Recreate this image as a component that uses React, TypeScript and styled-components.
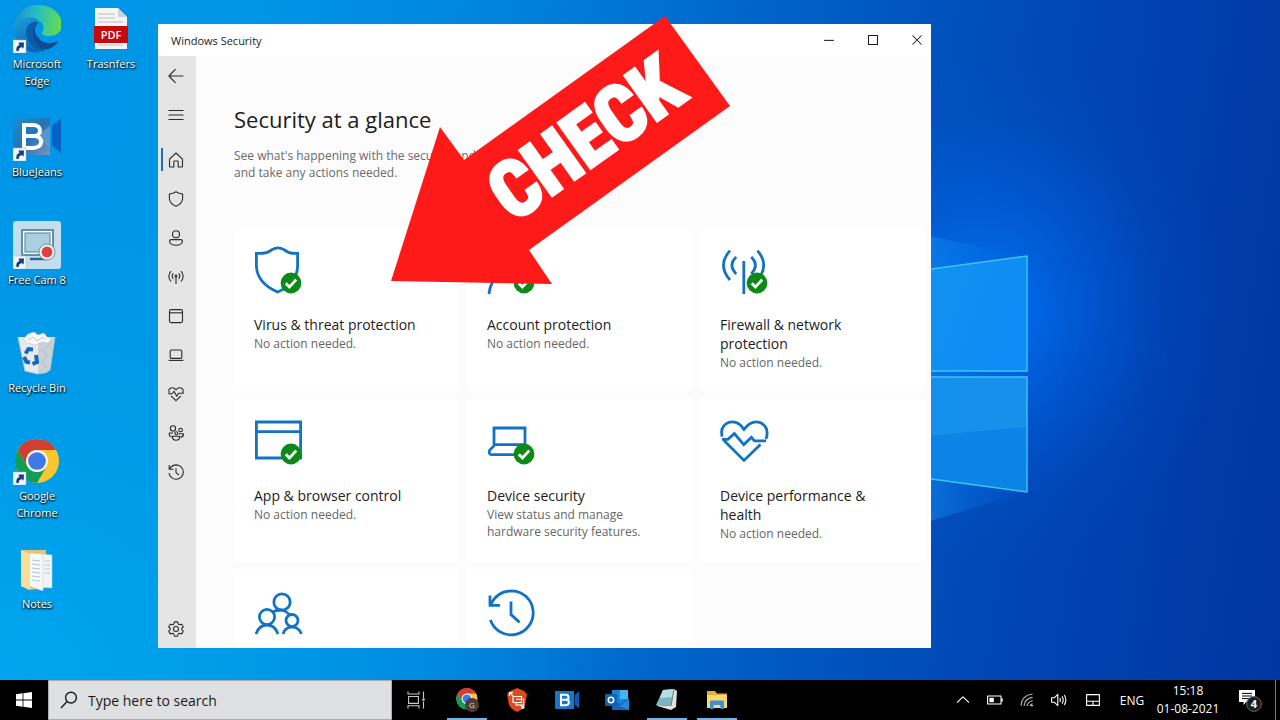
import React from "react";
import styled, { createGlobalStyle } from "styled-components";

const GlobalStyle = createGlobalStyle`
  *, *::before, *::after { box-sizing: border-box; }
  body {
    margin: 0;
    background: #000;
    font-family: "Open Sans", "Noto Sans", sans-serif;
  }
  button, input { font: inherit; color: inherit; }
`;

const Screen = styled.div`
  display: flex;
  flex-direction: column;
  min-height: 100vh;
`;

/* ---------- desktop ---------- */

const Desktop = styled.main`
  position: relative;
  flex: 1;
  overflow: hidden;
  isolation: isolate;
  background:
    radial-gradient(ellipse 240px 260px at 990px 310px, rgba(0, 120, 255, 0.8), rgba(0, 105, 240, 0.4) 45%, rgba(0, 90, 220, 0.12) 75%, transparent),
    radial-gradient(ellipse 620px 520px at 0 100%, rgba(0, 168, 238, 0.85), rgba(0, 160, 234, 0.5) 50%, transparent),
    linear-gradient(98deg, #0096e8 0%, #0096e6 18%, #0084de 36%, #0066cc 54%, #0050bc 70%, #0042b0 84%, #0036a2 100%);
`;

const Wallpaper = styled.svg`
  position: absolute;
  inset: 0;
  z-index: -1;
`;

const IconGrid = styled.div`
  display: grid;
  grid-template-rows: repeat(6, 108px);
  grid-auto-flow: column;
  grid-auto-columns: 74px;
  justify-content: start;
`;

const Shortcut = styled.button`
  display: flex;
  flex-direction: column;
  align-items: center;
  gap: 2px;
  padding: 5px 0 0;
  border: 0;
  background: none;
  color: #fff;
  font-size: 11px;
  line-height: 17px;
  text-shadow: 0 1px 2px #000, 1px 1px 2px rgba(0, 0, 0, 0.8);
`;

const ShortcutLabel = styled.span`
  max-width: 64px;
  text-align: center;
`;

/* ---------- security window ---------- */

const Window = styled.section`
  position: absolute;
  top: 24px;
  bottom: 32px;
  left: 158px;
  display: flex;
  flex-direction: column;
  width: 773px;
  max-width: calc(100% - 158px);
  overflow: hidden;
  background: #fcfcfc;
  color: #1c1c1c;
`;

const TitleBar = styled.header`
  display: flex;
  flex: 0 0 32px;
  align-items: center;
  padding-left: 13px;
  background: #fff;
`;

const WindowTitle = styled.span`
  flex: 1;
  font-size: 11px;
`;

const WindowButton = styled.button`
  display: grid;
  place-items: center;
  width: 44px;
  height: 32px;
  padding: 0;
  border: 0;
  background: none;
  &:last-child { margin-right: -8px; }
`;

const WindowBody = styled.div`
  display: flex;
  flex: 1;
  min-height: 0;
`;

const Sidebar = styled.nav`
  display: flex;
  flex: 0 0 38px;
  flex-direction: column;
  background: #e5e5e5;
`;

const SidebarGroup = styled.div`
  display: flex;
  flex: 1;
  flex-direction: column;
  padding-top: 6px;
`;

const SidebarButton = styled.button<{ $active?: boolean }>`
  display: grid;
  place-items: center;
  height: 39px;
  padding: 0 2px 0 0;
  border: 0;
  background: ${({ $active }) =>
    $active ? "linear-gradient(#1a6fb5, #1a6fb5) 3px center / 2px 23px no-repeat" : "none"};
  color: #2a2a2a;
`;

const Content = styled.div`
  flex: 1;
  min-width: 0;
  padding: 48px 0 0 38px;
`;

const Heading = styled.h1`
  margin: 0;
  font-size: 22px;
  font-weight: 400;
  line-height: 30px;
`;

const Intro = styled.p`
  margin: 13px 0 46px;
  color: #6b6b6b;
  font-size: 12px;
  line-height: 17px;
`;

const CardGrid = styled.div`
  display: grid;
  grid-template-columns: repeat(3, minmax(0, 225px));
  grid-auto-rows: 163px;
  gap: 8px;
`;

const Card = styled.a`
  padding: 19px 19px 0 20px;
  background: #fff;
  color: inherit;
  text-decoration: none;
`;

const CardIcon = styled.svg`
  display: block;
  width: 48px;
  height: 48px;
  margin-bottom: 21px;
  overflow: visible;
`;

const CardTitle = styled.h2`
  margin: 0 0 1px;
  font-size: 14px;
  font-weight: 400;
  line-height: 19px;
`;

const CardText = styled.p`
  margin: 0;
  color: #666;
  font-size: 12px;
  line-height: 17px;
`;

const Callout = styled.svg`
  position: absolute;
  top: 16px;
  left: 391px;
  pointer-events: none;
`;

/* ---------- taskbar ---------- */

const Taskbar = styled.footer`
  display: flex;
  flex: 0 0 40px;
  background: #000;
  color: #fff;
`;

const StartButton = styled.button`
  display: grid;
  flex: 0 0 48px;
  place-items: center;
  padding: 0;
  border: 0;
  background: none;
`;

const SearchBox = styled.label`
  display: flex;
  flex: 0 1 344px;
  align-items: center;
  gap: 10px;
  padding-left: 11px;
  border: 1px solid #a9abac;
  background: #dee0e1;
  color: #1a1a1a;
`;

const SearchInput = styled.input`
  flex: 1;
  min-width: 0;
  padding: 0;
  border: 0;
  outline: 0;
  background: none;
  font-size: 14px;
  &::placeholder { color: #1a1a1a; opacity: 1; }
`;

const TaskButton = styled.button<{ $running?: boolean }>`
  display: grid;
  flex: 0 0 50px;
  place-items: center;
  padding: 0;
  border: 0;
  background: ${({ $running }) =>
    $running ? "linear-gradient(#74b3e6, #74b3e6) center bottom / 40px 2px no-repeat" : "none"};
`;

const Tray = styled.div`
  display: flex;
  align-items: center;
  margin-left: auto;
`;

const TrayButton = styled.button<{ $wide?: boolean }>`
  display: grid;
  place-items: center;
  width: ${({ $wide }) => ($wide ? 36 : 32)}px;
  height: 40px;
  padding: 0;
  border: 0;
  background: none;
`;

const Language = styled.button`
  width: 42px;
  height: 40px;
  padding: 0;
  border: 0;
  background: none;
  font-size: 12px;
`;

const Clock = styled.time`
  width: 70px;
  font-size: 12px;
  line-height: 18px;
  text-align: center;
`;

const NotificationButton = styled(TrayButton)`
  width: 52px;
`;

const ShowDesktop = styled.button`
  width: 5px;
  height: 40px;
  padding: 0;
  border: 0;
  border-left: 1px solid #777;
  background: none;
`;

/* ---------- drawings ---------- */

const LinkArrow = () => (
  <g>
    <rect x="0" y="35" width="13" height="13" fill="#f4f6f8" stroke="#9fb4c6" strokeWidth=".5" />
    <path d="M3.4 46 C2.8 42.6 4 40.6 6.4 39.9 L5.4 37.6 L11 37.6 L10.6 43.4 L8.6 42 C6.6 42.8 5.4 43.8 5.8 46 Z" fill="#17407f" />
  </g>
);

const DesktopArt = ({ children }: { children: React.ReactNode }) => (
  <svg width="48" height="48" viewBox="0 0 48 48" aria-hidden="true">{children}</svg>
);

const EdgeIcon = () => (
  <DesktopArt>
    <defs>
      <linearGradient id="edgeTop" x1="0" y1="0.4" x2="1" y2="0.5">
        <stop offset="0" stopColor="#1c8fd6" /><stop offset=".45" stopColor="#27bcc4" /><stop offset="1" stopColor="#66dd4b" />
      </linearGradient>
      <linearGradient id="edgeLeft" x1="0" y1="0" x2="0.5" y2="1">
        <stop offset="0" stopColor="#1aa3df" /><stop offset="1" stopColor="#0d62b4" />
      </linearGradient>
    </defs>
    <path d="M1 22 C2 8 12 0 25 0 C39 0 49 9 49 20 C49 27 43 31 36 31 C30 31 28 29 29 27 C33 22 29 15 21 15 C12 15 5 19 1 26 Z" fill="url(#edgeTop)" />
    <path d="M1 22 C6 12 19 9 27 16 C20 13 13 20 13 29 C13 38 19 45 28 47 C12 50 0 38 1 22 Z" fill="url(#edgeLeft)" />
    <path d="M21 17 C15 22 15 31 20 38 C25 45 34 47 41 41 C44 39 45 37 44 36 C36 40 28 38 24 31 C21 27 21 22 25 18 C24 17 22 16 21 17 Z" fill="#0e4a91" />
    <path d="M21 17 C13 18 11 28 15 36 C19 44 25 47 32 46 C22 41 16 29 23 18 Z" fill="#0b5cab" />
    <LinkArrow />
  </DesktopArt>
);

const PdfIcon = () => (
  <DesktopArt>
    <path d="M8 3 H31 L40 12 V44 H8 Z" fill="#f5f5f5" />
    <path d="M31 3 V12 H40 Z" fill="#cbd4dc" />
    <path d="M11 9 H28 M11 13 H28 M11 17 H36 M11 40 H36" stroke="#cfcfcf" strokeWidth="1.4" />
    <rect x="7" y="21" width="34" height="17" rx="1" fill="#c6080f" />
    <text x="24" y="34" fill="#fff" fontSize="11" fontWeight="600" textAnchor="middle" style={{ textShadow: "none" }}>PDF</text>
  </DesktopArt>
);

const BlueJeansIcon = () => (
  <DesktopArt>
    <defs>
      <linearGradient id="bj" x1="0" y1="0" x2="1" y2="1">
        <stop offset="0" stopColor="#1690d5" /><stop offset=".5" stopColor="#2872b4" /><stop offset="1" stopColor="#7b92bd" />
      </linearGradient>
    </defs>
    <rect x="0" y="5" width="37" height="37" fill="url(#bj)" />
    <path d="M37 13 L24 23 L37 36 Z" fill="#5d9bd2" opacity=".8" />
    <path d="M39 13 L48 5 V40 L39 32 Z" fill="#0662c4" />
    <path d="M11 12 H20 C29 12 29 22 22 23 C31 24 30 35 20 35 H11 Z" fill="none" stroke="#fff" strokeWidth="4" />
    <path d="M11 23 H22" stroke="#fff" strokeWidth="4" />
    <LinkArrow />
  </DesktopArt>
);

const FreeCamIcon = () => (
  <DesktopArt>
    <rect x="0" y="0" width="48" height="48" rx="3" fill="#c3dcee" />
    <rect x="9" y="9" width="31" height="25" fill="#f5fafc" stroke="#426f8b" strokeWidth="1.5" />
    <rect x="12" y="12" width="25" height="19" fill="#aacfe0" stroke="#54839e" strokeWidth="1" />
    <path d="M17 38 H33" stroke="#2f648b" strokeWidth="2.4" />
    <circle cx="34" cy="31" r="8" fill="#e9eff2" stroke="#67808f" strokeWidth=".8" />
    <circle cx="34" cy="31" r="5.4" fill="#dc413b" />
    <LinkArrow />
  </DesktopArt>
);

const RecycleIcon = () => (
  <DesktopArt>
    <path d="M5 8 L42 8 L37 41 Q34 45 25 45 L12 42 Z" fill="#dfe5e9" />
    <path d="M5 8 L25 13 L25 45 L12 42 Z" fill="#e6eaed" />
    <path d="M25 13 L42 8 L37 41 L25 45 Z" fill="#c9d2d7" />
    <path d="M10 10 L15 5 L21 3 L25 6 L31 4 L34 8 L39 9 L35 14 L29 13 L22 16 L14 14 Z" fill="#fafafa" stroke="#b9c3c8" strokeWidth=".6" />
    <path d="M15 11 L20 8 L24 12 L30 8 L33 11 M28 20 L34 26 L29 33 L34 39 M38 14 L31 20" stroke="#aab5bb" strokeWidth=".8" fill="none" />
    <path d="M5 8 L12 42 L25 45 L37 41 L42 8" fill="none" stroke="#a9c2d0" strokeWidth="1" />
    <g fill="none" stroke="#1468bd" strokeWidth="4">
      <path d="M12.5 24.5 L15.5 20 L20 20.5" /><path d="M11 28 L13.5 33 L17 33.5" /><path d="M19.5 35 L24 33 L23 26" />
    </g>
  </DesktopArt>
);

const ChromeArt = () => (
  <g>
    <circle cx="24" cy="24" r="22" fill="#fbc52d" />
    <path d="M24 46 A22 22 0 0 1 4.9 13 L14.5 29.5 A11 11 0 0 0 33.5 29.5 Z" fill="#109d58" />
    <path d="M4.9 13 A22 22 0 0 1 43.1 13 H24 A11 11 0 0 0 14.5 29.5 Z" fill="#d23f32" />
    <circle cx="24" cy="24" r="11" fill="#f5f5f5" />
    <circle cx="24" cy="24" r="8.8" fill="#3f78e8" />
  </g>
);

const ChromeIcon = () => (
  <DesktopArt><ChromeArt /><LinkArrow /></DesktopArt>
);

const FolderIcon = () => (
  <DesktopArt>
    <path d="M8 5 H33 V43 L16 45 L8 41 Z" fill="#e3c477" />
    <path d="M27 9 L39 10 V43 L27 42 Z" fill="#f2f5f7" stroke="#c9d0d4" strokeWidth=".5" />
    <path d="M16 8 L30 9 V46 L16 41 Z" fill="#f6f8f9" stroke="#bdc8cf" strokeWidth=".5" />
    <path d="M19 15 L27 16 M19 19 L27 20 M19 23 L27 24 M19 27 L27 28 M19 31 L27 32 M19 35 L27 36 M32 16 H37 M32 20 H37 M32 24 H37 M32 28 H37" stroke="#b6c5cf" strokeWidth="1" />
    <path d="M8 5 L17 9 V45 L8 41 Z" fill="#f9df95" />
  </DesktopArt>
);

const Glyph = ({ children, size = 16 }: { children: React.ReactNode; size?: number }) => (
  <svg width={size} height={size} viewBox="0 0 16 16" fill="none" stroke="currentColor" strokeWidth="1.1" strokeLinejoin="round" aria-hidden="true">
    {children}
  </svg>
);

const Tick = () => (
  <g>
    <circle cx="37" cy="37" r="10.4" fill="#0c8a18" />
    <path d="M31.8 37.2 L35.4 41 L42.2 33.6" fill="none" stroke="#fff" strokeWidth="2.8" />
  </g>
);

const blue = { fill: "none", stroke: "#1273c4", strokeWidth: 2.8 };

const navItems = [
  { name: "Home", active: true, art: <path d="M1.5 7.2 L8 1 L14.5 7.2 V14.2 Q14.5 15 13.7 15 H10.2 V9.8 Q10.2 9 9.4 9 H6.6 Q5.8 9 5.8 9.8 V15 H2.3 Q1.5 15 1.5 14.2 Z" /> },
  { name: "Virus & threat protection", art: <path d="M8 .8 Q10.8 2.8 14.6 3 V8 Q14 13 8 15.3 Q2 13 1.4 8 V3 Q5.2 2.8 8 .8 Z" /> },
  { name: "Account protection", art: <><circle cx="8" cy="4.2" r="3.5" /><path d="M3.4 9.6 H12.6 Q14.5 9.6 14.5 11.2 Q14 15.2 8 15.2 Q2 15.2 1.5 11.2 Q1.5 9.6 3.4 9.6 Z" /></> },
  { name: "Firewall & network protection", art: <><path d="M8 7.5 V15 M5.3 10 Q3 7 5.3 4.4 M10.7 10 Q13 7 10.7 4.4 M3 12.4 Q-1.3 7.2 3 2.2 M13 12.4 Q17.3 7.2 13 2.2" /><circle cx="8" cy="7" r="1" /></> },
  { name: "App & browser control", art: <><rect x="1.5" y="1.6" width="13" height="13" rx="1.6" /><path d="M1.5 4.8 H14.5" /></> },
  { name: "Device security", art: <><rect x="2.2" y="3" width="11.6" height="8.4" rx="1.2" /><path d="M.6 13.4 H15.4" /></> },
  { name: "Device performance & health", art: <><path d="M1.3 7 Q-.2 2.2 4 1.7 Q6.4 1.6 8 3.8 Q9.6 1.6 12 1.7 Q16.2 2.2 14.7 7" /><path d="M.2 7.7 H4.2 L6 5.2 L8.8 10.2 L10.6 7.2 H15.8 M3 9.8 L8 14.7 L13 9.8" /></> },
  { name: "Family options", art: <><circle cx="5" cy="3.4" r="2.6" /><circle cx="12.6" cy="5" r="1.8" /><circle cx="8.4" cy="8.3" r="1.5" /><path d="M5 8 H1.4 Q.4 10.8 3.6 12 M10.8 8.8 H15.4 Q15.8 11.6 12.6 12.3 M4.4 11.3 H11.8 Q11.8 15.3 8 15.3 Q4.4 15.3 4.4 11.3 Z" /></> },
  { name: "Protection history", art: <><path d="M1.2 1 V5.2 H5.4 M1.5 5 Q4 .9 8.4 .9 A7.2 7.2 0 1 1 1 9 M8 4.2 V8.6 L11 11" /></> },
];

const cards = [
  { title: "Virus & threat protection", text: "No action needed.", art: <><path {...blue} d="M2.4 7.4 Q13 8 18 3.6 Q24 .2 30 3.6 Q35 8 43.6 7.4 V20 Q43 38 23.5 46 Q3 37 2.4 20 Z" /><Tick /></> },
  { title: "Account protection", text: "No action needed.", art: <><circle {...blue} cx="23" cy="14" r="11" /><path {...blue} d="M2 48 Q4 28 23 27 Q40 28 43 44" /><Tick /></> },
  { title: "Firewall & network protection", text: "No action needed.", art: <><path {...blue} d="M23.8 15 V48 M10 4.6 Q-3 19 10 34 M37.4 4.6 Q50 19 37.4 34 M16.2 11 Q7.8 19 16.2 28 M31.2 11 Q39.5 19 31.2 28" /><Tick /></> },
  { title: "App & browser control", text: "No action needed.", art: <><path {...blue} d="M2.4 5 H46.6 V41 H2.4 Z M2.4 14.6 H46.6" /><Tick /></> },
  { title: "Device security", text: "View status and manage hardware security features.", art: <><path {...blue} d="M7 27.6 V11 H38 V27.6 H8 L2.6 33.4 Q1.4 37.6 4.8 37.6 H30" /><Tick /></> },
  { title: "Device performance & health", text: "No action needed.", art: <path {...blue} d="M2.2 19.6 Q-.4 9 9 5.3 Q18 3 24 12.4 Q31 3 39.6 5.3 Q50 10 46 22 M2 22.4 H7.8 L14.4 16.6 L23.8 27.6 L31.4 20.2 L34.4 23.8 H46 M4 23.6 L24 43.4 L40.5 27.4" /> },
];

const moreCards = [
  { title: "Family options", art: <><circle {...blue} cx="28" cy="14" r="8.2" /><circle {...blue} cx="13" cy="29" r="7.6" /><circle {...blue} cx="38" cy="32.5" r="6" /><path {...blue} d="M2 46 Q5 37 13 37 Q21 37 24 46 M29 46 Q31 39.2 38 39.2 Q45 39.2 47.4 46 M19 24 Q22 22 28 22 Q32 23 36 27" /></> },
  { title: "Protection history", art: <path {...blue} d="M3 7.6 V17.4 H13 M3.4 17 Q10 3 25 2.8 A22 22 0 1 1 3.4 32 M24 13.6 V26.6 L32.6 34.4" /> },
];

const shortcuts = [
  { label: "Microsoft Edge", art: <EdgeIcon /> },
  { label: "BlueJeans", art: <BlueJeansIcon /> },
  { label: "Free Cam 8", art: <FreeCamIcon /> },
  { label: "Recycle Bin", art: <RecycleIcon /> },
  { label: "Google Chrome", art: <ChromeIcon /> },
  { label: "Notes", art: <FolderIcon /> },
  { label: "Trasnfers", art: <PdfIcon /> },
];

const TaskArt = ({ children }: { children: React.ReactNode }) => (
  <svg width="24" height="24" viewBox="0 0 24 24" aria-hidden="true">{children}</svg>
);

const taskItems = [
  { name: "Task View", art: <g fill="none" stroke="#c9c9c9" strokeWidth="1.1"><path d="M3 3.4 V6 H14 V3.4 M3 20.4 V17.8 H14 V20.4 M3.6 8.5 H13.4 V15.4 H3.6 Z M18.5 3.4 V10 M18.5 13.6 V20.4" /><circle cx="18.5" cy="11.5" r=".8" fill="#c9c9c9" /></g> },
  { name: "Google Chrome", running: true, art: <><g transform="translate(.4 -.8) scale(.48)"><ChromeArt /></g><circle cx="17" cy="17" r="7" fill="#4a3c38" /><text x="17" y="20" fill="#ddd" fontSize="8" textAnchor="middle">G</text></> },
  { name: "Brave", art: <><path d="M5 3 L12 0 L19 3 L22 6 L20 17 Q17 22 12 24 Q7 22 4 17 L2 6 Z" fill="#dd4a1c" /><path d="M4.4 8 V4.6 H8 M5 5 L8.4 8.4 M8 8.5 H16.5 V14.5 H8 Z M11 11.2 H18.6 V17 H11 V14.5 M15.4 17 L18.6 20 M18.8 17.6 V20.2 H16" fill="none" stroke="#fff" strokeWidth="1.1" /></> },
  { name: "BlueJeans", art: <><rect x="0" y="3" width="19" height="18" fill="#1877c8" /><path d="M19.5 7.5 L24 3 V20.5 L19.5 16.5 Z" fill="#0a5ab8" /><path d="M6 6.8 H10.5 C14.4 6.8 14.4 11.6 11 11.8 C15 12 15 17.2 10.5 17.2 H6 Z M6 11.8 H11" fill="none" stroke="#fff" strokeWidth="2" /></> },
  { name: "Outlook", art: <><rect x="7" y="2" width="16" height="18" fill="#1785d8" /><rect x="15" y="2" width="8" height="9" fill="#42b5f2" /><path d="M7 11 L15 16 L24 10 V22 H7 Z" fill="#1463b8" /><path d="M24 11 L14 18 L24 22 Z" fill="#2389d6" /><rect x="0" y="6" width="12" height="12" rx="1" fill="#0f62b4" /><circle cx="6" cy="12" r="2.7" fill="none" stroke="#fff" strokeWidth="1.5" /></> },
  { name: "Notepad", running: true, art: <><path d="M8 2 L19 1 L16 18 L1 17 Z" fill="#7db4c2" /><path d="M8 2 L19 1 L17.4 9 L4.6 10 Z" fill="#b6dde2" /><path d="M19 1 L22 3 L21 19 L16 22 L4 18.6 L1 17 L16 18 Z" fill="#e7e3d4" /><path d="M19 1 L16 18" stroke="#5c8793" /></> },
  { name: "File Explorer", running: true, art: <><path d="M2 3 H10 L12 5.5 H22 V20 H2 Z" fill="#e9ad32" /><path d="M2 7 H22 V20 H2 Z" fill="#fbd76f" /><path d="M5 21 V13.4 Q5 12.4 6 12.4 H18 Q19 12.4 19 13.4 V21 H15.4 V17 H8.6 V21 Z" fill="#3f8fd0" /></> },
];

export default function App() {
  return (
    <Screen>
      <GlobalStyle />
      <Desktop>
        <Wallpaper width="100%" height="100%" viewBox="0 0 1280 680" preserveAspectRatio="xMaxYMid slice" aria-hidden="true">
          <defs>
            <linearGradient id="pane" x1="0" y1="0" x2="1" y2="0.3">
              <stop offset="0" stopColor="#1695ee" /><stop offset="1" stopColor="#0c8cf4" />
            </linearGradient>
            <linearGradient id="beam" x1="0" y1="0" x2="1" y2="0">
              <stop offset="0" stopColor="#149cf4" stopOpacity=".65" /><stop offset="1" stopColor="#0a6ae8" stopOpacity="0" />
            </linearGradient>
          </defs>
          <path d="M900 230 L1027 256 V492 L900 530 Z" fill="url(#beam)" />
          <path d="M880 276 L1027 256 V371 H880 Z" fill="url(#pane)" />
          <path d="M880 377 H1027 V492 L880 472 Z" fill="#0c83e6" />
          <path d="M880 440 L1027 427 V377 H880 Z" fill="#1a97ec" opacity=".7" />
          <path d="M880 276 L1027 256 V371 H880 M880 377 H1027 V492 L880 472" fill="none" stroke="#3fc4fb" strokeWidth="1.4" />
        </Wallpaper>

        <IconGrid>
          {shortcuts.map((s) => (
            <Shortcut key={s.label} type="button">
              {s.art}
              <ShortcutLabel>{s.label}</ShortcutLabel>
            </Shortcut>
          ))}
        </IconGrid>

        <Window aria-label="Windows Security">
          <TitleBar>
            <WindowTitle>Windows Security</WindowTitle>
            <WindowButton type="button" aria-label="Minimize"><Glyph size={12}><path d="M1.5 8.5 H14.5" strokeWidth="1.4" /></Glyph></WindowButton>
            <WindowButton type="button" aria-label="Maximize"><Glyph size={12}><rect x="2" y="2" width="12" height="12" strokeWidth="1.4" /></Glyph></WindowButton>
            <WindowButton type="button" aria-label="Close"><Glyph size={12}><path d="M2 2 L14 14 M14 2 L2 14" strokeWidth="1.4" /></Glyph></WindowButton>
          </TitleBar>
          <WindowBody>
            <Sidebar aria-label="Sections">
              <SidebarButton type="button" aria-label="Back"><Glyph><path d="M15.4 8 H1 M7.6 1.2 L.9 8 L7.6 14.8" /></Glyph></SidebarButton>
              <SidebarButton type="button" aria-label="Menu"><Glyph><path d="M.5 3.5 H15.5 M.5 8 H15.5 M.5 12.5 H15.5" /></Glyph></SidebarButton>
              <SidebarGroup>
                {navItems.map((n) => (
                  <SidebarButton key={n.name} type="button" aria-label={n.name} $active={n.active}>
                    <Glyph>{n.art}</Glyph>
                  </SidebarButton>
                ))}
              </SidebarGroup>
              <SidebarButton type="button" aria-label="Settings">
                <Glyph>
                  <path d="M6.4 .9 H9.6 L10.2 3 L11.6 3.8 L13.7 3.2 L15.3 6 L13.8 7.4 V8.8 L15.3 10.2 L13.7 12.9 L11.6 12.3 L10.2 13.1 L9.6 15.2 H6.4 L5.8 13.1 L4.4 12.3 L2.3 12.9 L.7 10.2 L2.2 8.8 V7.4 L.7 6 L2.3 3.2 L4.4 3.8 L5.8 3 Z" />
                  <circle cx="8" cy="8" r="2.5" />
                </Glyph>
              </SidebarButton>
            </Sidebar>
            <Content>
              <Heading>Security at a glance</Heading>
              <Intro>
                See what's happening with the security and health of your device
                <br />
                and take any actions needed.
              </Intro>
              <CardGrid>
                {cards.map((c) => (
                  <Card key={c.title} href="#">
                    <CardIcon viewBox="0 0 48 48" aria-hidden="true">{c.art}</CardIcon>
                    <CardTitle>{c.title}</CardTitle>
                    <CardText>{c.text}</CardText>
                  </Card>
                ))}
                {moreCards.map((c) => (
                  <Card key={c.title} href="#" aria-label={c.title}>
                    <CardIcon viewBox="0 0 48 48" aria-hidden="true">{c.art}</CardIcon>
                  </Card>
                ))}
              </CardGrid>
            </Content>
          </WindowBody>
        </Window>

        <Callout width="340" height="270" viewBox="0 0 340 270" role="img" aria-label="Check">
          <path d="M274 0 L339 90 L138 234 L161 268 L0 265 L49 111 L73 144 Z" fill="#ff1a1a" />
          <text
            transform="translate(122 207) rotate(-35.5)"
            fill="#fff"
            stroke="#fff"
            strokeWidth="4"
            fontFamily="'Liberation Sans Narrow', 'Roboto Condensed', 'DejaVu Sans Condensed', sans-serif"
            fontSize="77"
            fontWeight="700"
          >
            CHECK
          </text>
        </Callout>
      </Desktop>

      <Taskbar>
        <StartButton type="button" aria-label="Start">
          <svg width="16" height="16" viewBox="0 0 16 16" fill="#fff" aria-hidden="true">
            <path d="M0 2.3 L6.6 1.3 V7.6 H0 Z M7.4 1.2 L16 0 V7.6 H7.4 Z M0 8.4 H6.6 V14.7 L0 13.8 Z M7.4 8.4 H16 V16 L7.4 14.8 Z" />
          </svg>
        </StartButton>
        <SearchBox>
          <svg width="18" height="18" viewBox="0 0 18 18" fill="none" stroke="#1a1a1a" strokeWidth="1.4" aria-hidden="true">
            <circle cx="11" cy="6.6" r="5.4" /><path d="M7 10.6 L1 17" />
          </svg>
          <SearchInput type="text" placeholder="Type here to search" aria-label="Search" />
        </SearchBox>
        {taskItems.map((t) => (
          <TaskButton key={t.name} type="button" aria-label={t.name} $running={t.running}>
            <TaskArt>{t.art}</TaskArt>
          </TaskButton>
        ))}
        <Tray>
          <TrayButton type="button" aria-label="Show hidden icons"><Glyph><path d="M2 10.6 L8 4.8 L14 10.6" /></Glyph></TrayButton>
          <TrayButton type="button" aria-label="Battery"><Glyph><path d="M.6 4 H14 V12 H.6 Z M15.2 6.4 V9.6" /><rect x="2.4" y="5.8" width="4.4" height="4.4" fill="currentColor" stroke="none" /></Glyph></TrayButton>
          <TrayButton type="button" aria-label="Network"><Glyph><g stroke="#bbb"><path d="M2 13.6 Q3 3 13.6 2 M5 14 Q6 6.4 13.6 5.4 M8 14.2 Q9 9.6 13.6 8.8" /><path d="M11 14 Q11.4 12.4 13.4 11.8" /><circle cx="13" cy="13.6" r=".8" fill="#fff" stroke="none" /></g></Glyph></TrayButton>
          <TrayButton type="button" aria-label="Volume"><Glyph><path d="M.6 5.8 H3.2 L6.8 2.4 V13.6 L3.2 10.2 H.6 Z M8.8 6 Q10 8 8.8 10 M11 4.4 Q13.4 8 11 11.6 M13.2 3 Q16.6 8 13.2 13" /></Glyph></TrayButton>
          <TrayButton type="button" aria-label="Touchpad" $wide><Glyph><path d="M1.6 2.6 H14.4 V13.4 H1.6 Z M1.6 9.2 H14.4 M8 9.2 V13.4" /></Glyph></TrayButton>
          <Language type="button">ENG</Language>
          <Clock dateTime="2021-08-01T15:18">15:18<br />01-08-2021</Clock>
          <NotificationButton type="button" aria-label="4 notifications">
            <svg width="26" height="24" viewBox="0 0 26 24" aria-hidden="true">
              <path d="M3 2 H19 V14 H10 L7.6 17 V14 H3 Z" fill="#fff" />
              <path d="M6 5.4 H16 M6 8 H16 M6 10.6 H13" stroke="#000" strokeWidth="1" />
              <circle cx="18" cy="16" r="7.4" fill="#1d1d1d" stroke="#666" />
              <text x="18" y="20" fill="#fff" fontSize="11" fontWeight="700" textAnchor="middle">4</text>
            </svg>
          </NotificationButton>
          <ShowDesktop type="button" aria-label="Show desktop" />
        </Tray>
      </Taskbar>
    </Screen>
  );
}
